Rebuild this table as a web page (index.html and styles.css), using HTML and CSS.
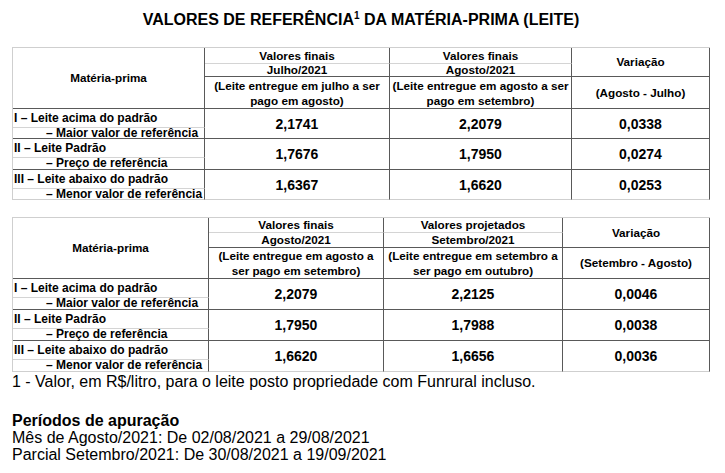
FILE: index.html
```html
<!DOCTYPE html>
<html lang="pt-BR">
<head>
<meta charset="utf-8">
<link rel="stylesheet" href="styles.css">
</head>
<body>
<div class="page">
  <h1 class="title">VALORES DE REFERÊNCIA<sup>1</sup> DA MATÉRIA-PRIMA (LEITE)</h1>

  <table class="grid t1">
    <colgroup><col class="c1"><col class="c2"><col class="c3"><col class="c4"></colgroup>
    <tr class="h1">
      <td rowspan="3" class="hd">Matéria-prima</td>
      <td class="hd soft">Valores finais</td>
      <td class="hd soft">Valores finais</td>
      <td rowspan="2" class="hd">Variação</td>
    </tr>
    <tr class="h2">
      <td class="hd">Julho/2021</td>
      <td class="hd">Agosto/2021</td>
    </tr>
    <tr class="h3">
      <td class="hd two">(Leite entregue em julho a ser<br>pago em agosto)</td>
      <td class="hd two">(Leite entregue em agosto a ser<br>pago em setembro)</td>
      <td class="hd">(Agosto - Julho)</td>
    </tr>
    <tr class="ra">
      <td class="lbl soft">I – Leite acima do padrão</td>
      <td rowspan="2" class="val">2,1741</td>
      <td rowspan="2" class="val">2,2079</td>
      <td rowspan="2" class="val">0,0338</td>
    </tr>
    <tr class="rb"><td class="lbl sub">– Maior valor de referência</td></tr>
    <tr class="ra">
      <td class="lbl soft">II – Leite Padrão</td>
      <td rowspan="2" class="val">1,7676</td>
      <td rowspan="2" class="val">1,7950</td>
      <td rowspan="2" class="val">0,0274</td>
    </tr>
    <tr class="rb wide"><td class="lbl sub">– Preço de referência</td></tr>
    <tr class="ra">
      <td class="lbl soft">III – Leite abaixo do padrão</td>
      <td rowspan="2" class="val last">1,6367</td>
      <td rowspan="2" class="val last">1,6620</td>
      <td rowspan="2" class="val last">0,0253</td>
    </tr>
    <tr class="rb"><td class="lbl sub last">– Menor valor de referência</td></tr>
  </table>

  <table class="grid t2">
    <colgroup><col class="c1"><col class="c2"><col class="c3"><col class="c4"></colgroup>
    <tr class="h1">
      <td rowspan="3" class="hd">Matéria-prima</td>
      <td class="hd soft">Valores finais</td>
      <td class="hd soft">Valores projetados</td>
      <td rowspan="2" class="hd">Variação</td>
    </tr>
    <tr class="h2">
      <td class="hd">Agosto/2021</td>
      <td class="hd">Setembro/2021</td>
    </tr>
    <tr class="h3">
      <td class="hd two">(Leite entregue em agosto a<br>ser pago em setembro)</td>
      <td class="hd two">(Leite entregue em setembro a<br>ser pago em outubro)</td>
      <td class="hd">(Setembro - Agosto)</td>
    </tr>
    <tr class="ra">
      <td class="lbl soft">I – Leite acima do padrão</td>
      <td rowspan="2" class="val">2,2079</td>
      <td rowspan="2" class="val">2,2125</td>
      <td rowspan="2" class="val">0,0046</td>
    </tr>
    <tr class="rb wide"><td class="lbl sub">– Maior valor de referência</td></tr>
    <tr class="ra">
      <td class="lbl soft">II – Leite Padrão</td>
      <td rowspan="2" class="val">1,7950</td>
      <td rowspan="2" class="val">1,7988</td>
      <td rowspan="2" class="val">0,0038</td>
    </tr>
    <tr class="rb wide"><td class="lbl sub">– Preço de referência</td></tr>
    <tr class="ra">
      <td class="lbl soft">III – Leite abaixo do padrão</td>
      <td rowspan="2" class="val last">1,6620</td>
      <td rowspan="2" class="val last">1,6656</td>
      <td rowspan="2" class="val last">0,0036</td>
    </tr>
    <tr class="rb wide"><td class="lbl sub last">– Menor valor de referência</td></tr>
  </table>

  <p class="note">1 - Valor, em R$/litro, para o leite posto propriedade com Funrural incluso.</p>

  <div class="periods">
    <p class="periods-title">Períodos de apuração</p>
    <p>Mês de Agosto/2021: De 02/08/2021 a 29/08/2021</p>
    <p>Parcial Setembro/2021: De 30/08/2021 a 19/09/2021</p>
  </div>
</div>
</body>
</html>
```

FILE: styles.css
```css
* { box-sizing: border-box; }
html, body { margin: 0; padding: 0; background: #fff; }
body {
  font-family: "Liberation Sans", Arial, sans-serif;
  color: #000;
}
.page {
  width: 725px;
  padding: 11px 0 0 12px;
}
.title {
  margin: 0 0 18px 0;
  width: 698px;
  text-align: center;
  font-size: 16px;
  line-height: 18px;
  font-weight: bold;
}
.title sup {
  font-size: 10px;
  line-height: 0;
  vertical-align: 6px;
}
.grid {
  border-collapse: separate;
  border-spacing: 0;
  table-layout: fixed;
  width: 698px;
  border-top: 1px solid #cfcfcf;
  border-left: 1px solid #cfcfcf;
  font-weight: bold;
}
.grid td {
  padding: 0;
  text-align: center;
  vertical-align: middle;
  border-right: 1px solid #595959;
  border-bottom: 1px solid #595959;
  font-size: 12px;
  line-height: 12px;
  white-space: nowrap;
  overflow: visible;
}
.grid td.hd { font-size: 11.7px; }
.grid td.two { line-height: 15px; }
.grid td.soft { border-bottom-color: #d4d4d4; }
.grid td.last { border-bottom-color: #cfcfcf; }

.t1 .c1 { width: 192px; }
.t1 .c2 { width: 185px; }
.t1 .c3 { width: 182px; }
.t1 .c4 { width: 138px; }
.t2 .c1 { width: 196px; }
.t2 .c2 { width: 175px; }
.t2 .c3 { width: 179px; }
.t2 .c4 { width: 147px; }

.t1 .h1 td { height: 16px; }
.t1 .h2 td { height: 13px; }
.t1 .h3 td { height: 32px; }
.t2 .h1 td { height: 15px; }
.t2 .h2 td { height: 15px; }
.t2 .h3 td { height: 31px; }

.grid .ra td.lbl { height: 19px; line-height: 14px; vertical-align: top; padding-top: 2px; }
.grid .rb td.lbl { height: 11px; line-height: 10px; }
.grid .rb.wide td.lbl { height: 12px; line-height: 11px; }
.grid td.lbl { text-align: left; padding-left: 1px; }
.grid td.sub { padding-left: 33px; }
.grid td.val { font-size: 14px; line-height: 14px; }

.grid.t2 { margin-top: 17px; }

.note {
  margin: 1px 0 0 0;
  font-size: 16px;
  line-height: 18px;
}
.periods {
  margin-top: 21px;
  font-size: 16px;
  line-height: 17px;
}
.periods p { margin: 0; }
.periods .periods-title { font-weight: bold; }
```
